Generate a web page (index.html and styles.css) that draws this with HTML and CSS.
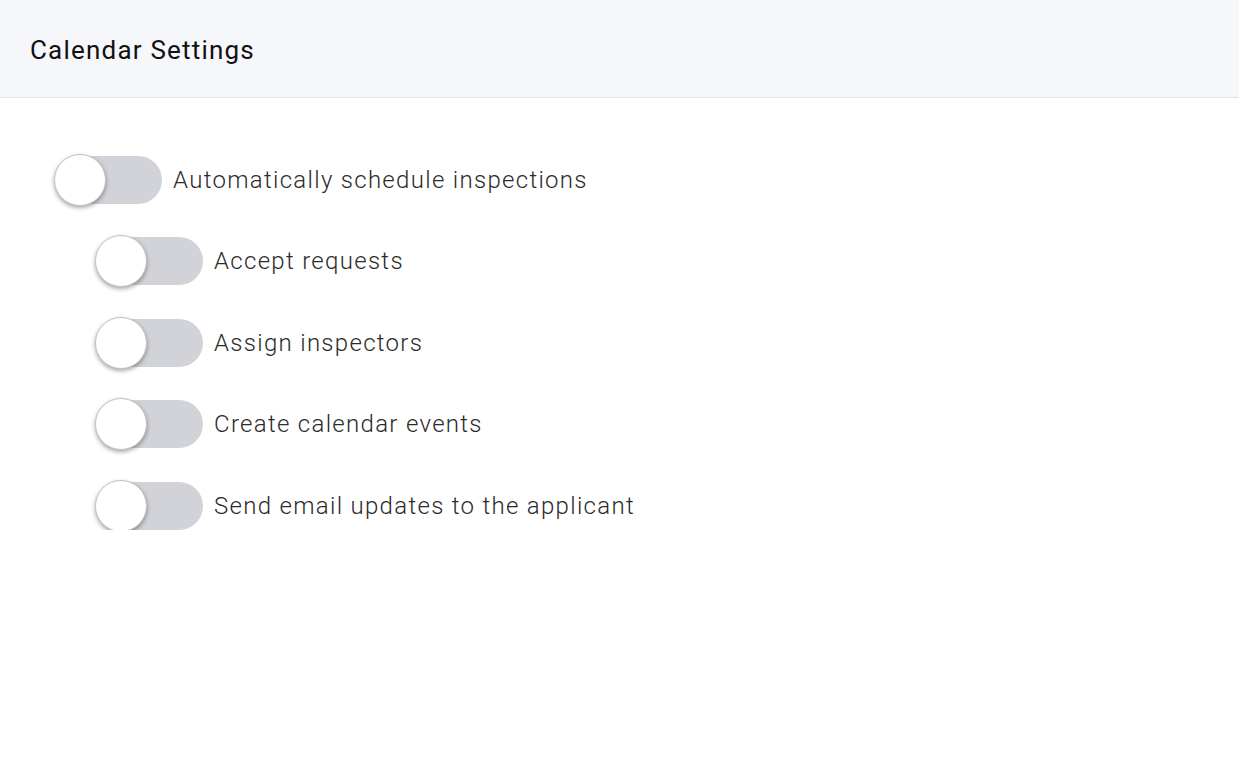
FILE: index.html
```html
<!DOCTYPE html>
<html lang="en">
<head>
  <meta charset="UTF-8" />
  <title>Calendar Settings</title>
  <link rel="stylesheet" href="styles.css">
</head>
<body>
  <header class="page-header">
    <h1>Calendar Settings</h1>
  </header>

  <main class="settings">
    <label class="setting">
      <input type="checkbox" class="switch-input">
      <span class="switch"><span class="knob"></span></span>
      <span class="setting-label">Automatically schedule inspections</span>
    </label>

    <div class="sub-settings">
      <label class="setting">
        <input type="checkbox" class="switch-input">
        <span class="switch"><span class="knob"></span></span>
        <span class="setting-label">Accept requests</span>
      </label>
      <label class="setting">
        <input type="checkbox" class="switch-input">
        <span class="switch"><span class="knob"></span></span>
        <span class="setting-label">Assign inspectors</span>
      </label>
      <label class="setting">
        <input type="checkbox" class="switch-input">
        <span class="switch"><span class="knob"></span></span>
        <span class="setting-label">Create calendar events</span>
      </label>
      <label class="setting">
        <input type="checkbox" class="switch-input">
        <span class="switch"><span class="knob"></span></span>
        <span class="setting-label">Send email updates to the applicant</span>
      </label>
    </div>
  </main>
</body>
</html>
```

FILE: styles.css
```css
body {
  margin: 0;
  background: #fff;
  color: #2b2b2b;
  font-family: Roboto, "Liberation Sans", sans-serif;
}
.page-header {
  height: 98px;
  background: #f6f7fb;
  border-bottom: 1px solid #e3e4e8;
  display: flex;
  align-items: center;
  padding: 2px 30px 0;
  box-sizing: border-box;
}
.page-header h1 {
  margin: 0;
  font-size: 26px;
  font-weight: 400;
  letter-spacing: 1.2px;
  color: #111;
}
.settings {
  padding: 58px 0 0 54px;
  display: flex;
  flex-direction: column;
  gap: 33px;
}
.sub-settings {
  padding-left: 41px;
  display: flex;
  flex-direction: column;
  gap: 33.5px;
}
.setting {
  display: flex;
  align-items: center;
  gap: 11px;
  cursor: pointer;
}
.switch-input {
  display: none;
}
.switch {
  position: relative;
  width: 108px;
  height: 48px;
  flex: none;
}
.switch::before {
  content: "";
  position: absolute;
  left: 4px;
  right: 0;
  top: 0;
  bottom: 0;
  background: #d1d3d9;
  border-radius: 24px;
}
.knob {
  position: absolute;
  left: 0;
  top: -2px;
  width: 52px;
  height: 52px;
  border-radius: 50%;
  background: #fff;
  border: 1px solid #c4c4c4;
  box-sizing: border-box;
  box-shadow: 0 2px 4px rgba(0, 0, 0, 0.35);
}
.switch-input:checked + .switch::before {
  background: #4a7cf3;
}
.switch-input:checked + .switch .knob {
  left: 56px;
}
.setting-label {
  font-size: 24px;
  font-weight: 300;
  color: #2b2b2b;
  letter-spacing: 1.3px;
}
```
